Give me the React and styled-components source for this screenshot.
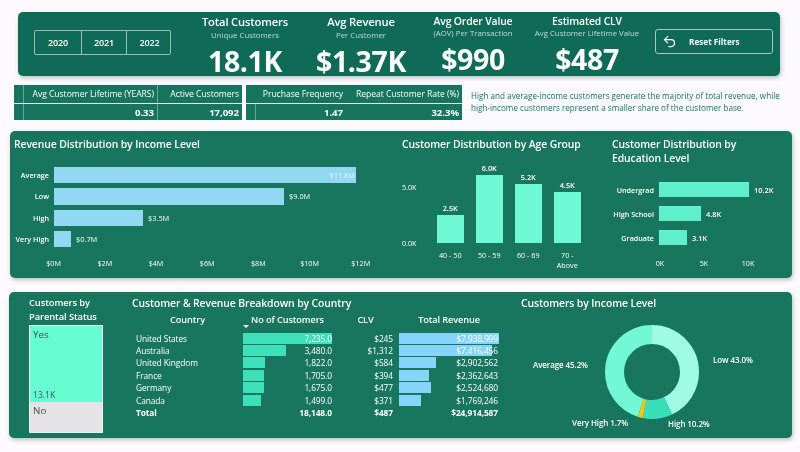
import React from 'react';
import styled, {createGlobalStyle} from 'styled-components';
import {Undo2} from 'lucide-react';

const GlobalStyle = createGlobalStyle`
    html, body {
        margin: 0;
        padding: 0;
        background: #fcfafc;
    }
    * {
        box-sizing: border-box;
    }
`;

const Page = styled.div`
    width: 800px;
    height: 452px;
    overflow: hidden;
    padding-top: 12px;
    font-family: "Open Sans", "Noto Sans", sans-serif;
    color: #fff;
    filter: blur(0.3px);
`;

const Banner = styled.header`
    width: 762px;
    height: 64px;
    margin-left: 18px;
    padding-left: 16px;
    display: grid;
    grid-template-columns: 137px 148px 84px 140px 88px 142px;
    background: #0f6b57;
    border-radius: 5px;
    box-shadow: 1px 2px 4px rgba(60, 90, 85, 0.35);
`;

const Slicer = styled.div`
    width: 137px;
    height: 25px;
    margin-top: 18px;
    display: grid;
    grid-template-columns: 46px 45px 46px;
    border: 1px solid #9dbdb4;
    border-radius: 2px;
`;

const SlicerItem = styled.div`
    display: flex;
    align-items: center;
    justify-content: center;
    font-size: 9px;
    letter-spacing: -0.1px;
    font-weight: 600;
    border-left: ${({$first}) => ($first ? 'none' : '1px solid #9dbdb4')};
`;

const Kpi = styled.div`
    display: flex;
    flex-direction: column;
    align-items: center;
    white-space: nowrap;
    padding-top: ${({$raised}) => ($raised ? '2px' : '3px')};
`;

const KpiTitle = styled.div`
    font-size: ${({$small}) => ($small ? '10.4px' : '11.2px')};
    line-height: 14px;
    font-weight: 600;
    letter-spacing: -0.15px;
`;

const KpiSub = styled.div`
    font-size: 7.8px;
    line-height: 11px;
    color: #c5dad4;
    margin-top: ${({$small}) => ($small ? '0' : '1px')};
`;

const KpiValue = styled.div`
    font-size: 28.5px;
    line-height: 34px;
    font-weight: 700;
    letter-spacing: -0.4px;
    margin-top: ${({$small}) => ($small ? '3px' : '3px')};
`;

const ResetButton = styled.div`
    width: 118px;
    height: 25px;
    margin: 17px 0 0 24px;
    padding-left: 6px;
    display: flex;
    align-items: center;
    border: 1px solid #a9c8bf;
    border-radius: 3px;
    font-size: 8.2px;
    font-weight: 700;
    gap: 12px;
`;

const InfoRow = styled.section`
    height: 35px;
    margin: 9px 0 0 14px;
    display: flex;
`;

const MiniTable = styled.div`
    width: ${({$width}) => $width}px;
    margin-right: ${({$gap}) => $gap}px;
    display: grid;
    grid-template-columns: ${({$cols}) => $cols};
    grid-template-rows: 18px 16px;
    row-gap: 1px;
    background: #dcebe6;
`;

const MiniHead = styled.div`
    background: #17755f;
    font-size: 8.6px;
    letter-spacing: -0.05px;
    display: flex;
    align-items: center;
    justify-content: flex-end;
    padding-right: 3px;
    white-space: nowrap;
    border-left: 1px solid ${({$line}) => ($line ? 'rgba(255, 255, 255, 0.35)' : 'transparent')};
`;

const MiniValue = styled(MiniHead)`
    font-size: 9.6px;
    font-weight: 700;
`;

const Insight = styled.p`
    width: 316px;
    margin: 5px 0 0;
    color: #1b7564;
    font-size: 8.14px;
    line-height: 11.5px;
`;

const Panel = styled.section`
    margin: ${({$top}) => $top}px 0 0 ${({$left}) => $left}px;
    width: ${({$left}) => 792 - $left}px;
    height: ${({$height}) => $height}px;
    display: grid;
    grid-template-columns: ${({$cols}) => $cols};
    background: #18765f;
    border-radius: 5px;
    box-shadow: 1px 2px 4px rgba(60, 90, 85, 0.35);
`;

const Section = styled.div`
    padding: ${({$pad}) => $pad || '6px 0 0 4px'};
    min-width: 0;
`;

const Title = styled.h3`
    margin: 0;
    font-size: ${({$small}) => ($small ? '9.4px' : '10.4px')};
    line-height: 14px;
    font-weight: 600;
    letter-spacing: -0.1px;
`;

const BarGrid = styled.div`
    display: grid;
    grid-template-columns: ${({$label}) => $label}px 1fr;
    column-gap: 5px;
    row-gap: ${({$gap}) => $gap}px;
    margin-top: ${({$top}) => $top}px;
`;

const BarLabel = styled.div`
    font-size: 7.2px;
    font-weight: 600;
    white-space: nowrap;
    display: flex;
    align-items: center;
    justify-content: flex-end;
`;

const BarTrack = styled.div`
    display: flex;
    align-items: center;
    gap: 5px;
    font-size: 7.4px;
    font-weight: ${({$bold}) => ($bold ? 600 : 500)};
    height: ${({$height}) => $height}px;
`;

const Bar = styled.div`
    height: 100%;
    background: ${({$color}) => $color};
    display: flex;
    align-items: center;
    justify-content: flex-end;
    padding-right: 1px;
    color: #e3f6fb;
`;

const Ticks = styled.div`
    display: flex;
    margin: ${({$margin}) => $margin};
`;

const Tick = styled.div`
    width: ${({$width}) => $width}px;
    text-align: center;
    font-size: 7.2px;
    font-weight: 500;
    line-height: 10px;
`;

const AgeBody = styled.div`
    display: flex;
    height: 115px;
    margin-top: 2px;
`;

const YAxis = styled.div`
    width: 35px;
    height: 95px;
    padding-top: 29px;
    display: flex;
    flex-direction: column;
    justify-content: space-between;
    font-size: 7.2px;
    font-weight: 500;
    line-height: 10px;
`;

const Columns = styled.div`
    display: flex;
    flex-direction: column;
`;

const ColumnPlot = styled.div`
    height: 90px;
    flex: none;
    display: flex;
    align-items: flex-end;
    gap: 12.5px;
`;

const ColumnItem = styled.div`
    width: 26.5px;
    display: flex;
    flex-direction: column;
    align-items: center;
    font-size: 7.4px;
    font-weight: 600;
    line-height: 13px;
`;

const ColumnBar = styled.div`
    width: 100%;
    background: #6ef8d4;
`;

const ColumnLabels = styled.div`
    display: flex;
    gap: 12.5px;
    margin-top: 7px;
`;

const ColumnLabel = styled.div`
    width: 26.5px;
    text-align: center;
    font-size: 7.2px;
    font-weight: 500;
    line-height: 10px;
    white-space: nowrap;
`;

const TreeMap = styled.div`
    width: 74px;
    height: 108px;
    margin-top: 1px;
    display: flex;
    flex-direction: column;
    border: 1px solid #f0f5f4;
    color: #40524c;
`;

const TreeCell = styled.div`
    height: ${({$height}) => $height}px;
    flex: none;
    padding: 3px 3px 1px;
    background: ${({$color}) => $color};
    display: flex;
    flex-direction: column;
    justify-content: space-between;
    font-size: 8.6px;
    line-height: 12px;
`;

const TreeName = styled.span`
    font-size: 9.8px;
`;

const Table = styled.div`
    width: 368px;
    display: grid;
    grid-template-columns: 111px 89px 61px 6px 100px;
    grid-template-rows: 22px;
    grid-auto-rows: 12.4px;
    font-size: 8.4px;
    letter-spacing: -0.1px;
`;

const HeadCell = styled.div`
    grid-column: ${({$col}) => $col};
    height: 18px;
    font-size: 9.2px;
    font-weight: 600;
    display: flex;
    align-items: center;
    justify-content: center;
    position: relative;
    padding-left: ${({$shift}) => $shift || 0}px;
`;

const SortArrow = styled.span`
    position: absolute;
    left: 0;
    top: 15px;
    width: 0;
    height: 0;
    border-left: 3px solid transparent;
    border-right: 3px solid transparent;
    border-top: 3px solid #fff;
`;

const NameCell = styled.div`
    padding-left: 4px;
    display: flex;
    align-items: center;
    font-weight: ${({$bold}) => ($bold ? 700 : 400)};
`;

const ValueCell = styled.div`
    position: relative;
    display: flex;
    align-items: center;
    justify-content: flex-end;
    padding-right: ${({$pad}) => $pad || 0}px;
    grid-column: ${({$col}) => $col || 'auto'};
    font-weight: ${({$bold}) => ($bold ? 700 : 400)};
`;

const DataBar = styled.div`
    position: absolute;
    left: 0;
    top: 0.7px;
    height: 11px;
    background: ${({$color}) => $color};
`;

const CellText = styled.span`
    position: relative;
`;

const DonutCanvas = styled.div`
    position: relative;
    height: 126px;
    padding: 15px 0 0 84px;
`;

const DonutSvg = styled.svg`
    display: block;
`;

const DonutLabel = styled.span`
    position: absolute;
    left: ${({$x}) => $x}px;
    top: ${({$y}) => $y}px;
    font-size: 8px;
    letter-spacing: -0.1px;
    line-height: 10px;
    font-weight: 600;
    white-space: nowrap;
`;

const revenue = [
    {label: 'Average', value: '$11.8M', width: 302, inside: true},
    {label: 'Low', value: '$9.0M', width: 230},
    {label: 'High', value: '$3.5M', width: 89},
    {label: 'Very High', value: '$0.7M', width: 17},
];

const ageGroups = [
    {label: '40 - 50', value: '2.5K', height: 28},
    {label: '50 - 59', value: '6.0K', height: 68},
    {label: '60 - 69', value: '5.2K', height: 59},
    {label: '70 -', sub: 'Above', value: '4.5K', height: 51},
];

const education = [
    {label: 'Undergrad', value: '10.2K', width: 90},
    {label: 'High School', value: '4.8K', width: 42},
    {label: 'Graduate', value: '3.1K', width: 28},
];

const countries = [
    ['United States', '7,235.0', 7235, '$245', '$7,938,999', 7938999],
    ['Australia', '3,480.0', 3480, '$1,312', '$7,416,456', 7416456],
    ['United Kingdom', '1,822.0', 1822, '$584', '$2,902,562', 2902562],
    ['France', '1,705.0', 1705, '$394', '$2,362,643', 2362643],
    ['Germany', '1,675.0', 1675, '$477', '$2,524,680', 2524680],
    ['Canada', '1,499.0', 1499, '$371', '$1,769,246', 1769246],
];

const income = [
    {share: 43.0, color: '#a0fbe5'},
    {share: 10.2, color: '#38dfb8'},
    {share: 1.7, color: '#f2c80f'},
    {share: 45.1, color: '#72f8d5'},
];

const Donut = () => {
    let offset = 0;
    return (
        <DonutSvg width="94" height="94" viewBox="0 0 94 94">
            <g transform="rotate(-90 47 47)">
                {income.map((slice) => {
                    const circle = (
                        <circle
                            key={slice.color}
                            cx="47"
                            cy="47"
                            r="37.5"
                            fill="none"
                            stroke={slice.color}
                            strokeWidth="19"
                            pathLength="100"
                            strokeDasharray={`${slice.share} ${100 - slice.share}`}
                            strokeDashoffset={-offset}
                        />
                    );
                    offset += slice.share;
                    return circle;
                })}
            </g>
        </DonutSvg>
    );
};

const App = () => {
    return (
        <Page>
            <GlobalStyle />
            <Banner>
                <Slicer>
                    <SlicerItem $first>2020</SlicerItem>
                    <SlicerItem>2021</SlicerItem>
                    <SlicerItem>2022</SlicerItem>
                </Slicer>
                <Kpi>
                    <KpiTitle>Total Customers</KpiTitle>
                    <KpiSub>Unique Customers</KpiSub>
                    <KpiValue>18.1K</KpiValue>
                </Kpi>
                <Kpi>
                    <KpiTitle>Avg Revenue</KpiTitle>
                    <KpiSub>Per Customer</KpiSub>
                    <KpiValue>$1.37K</KpiValue>
                </Kpi>
                <Kpi $raised>
                    <KpiTitle $small>Avg Order Value</KpiTitle>
                    <KpiSub $small>(AOV) Per Transaction</KpiSub>
                    <KpiValue $small>$990</KpiValue>
                </Kpi>
                <Kpi $raised>
                    <KpiTitle $small>Estimated CLV</KpiTitle>
                    <KpiSub $small>Avg Customer Lifetime Value</KpiSub>
                    <KpiValue $small>$487</KpiValue>
                </Kpi>
                <ResetButton>
                    <Undo2 size={15} strokeWidth={2} />
                    <span>Reset Filters</span>
                </ResetButton>
            </Banner>

            <InfoRow>
                <MiniTable $width={228} $gap={4} $cols="9px 134px 85px">
                    <MiniHead />
                    <MiniHead $line>Avg Customer Lifetime (YEARS)</MiniHead>
                    <MiniHead $line>Active Customers</MiniHead>
                    <MiniValue />
                    <MiniValue $line>0.33</MiniValue>
                    <MiniValue $line>17,092</MiniValue>
                </MiniTable>
                <MiniTable $width={216} $gap={9} $cols="9px 91px 116px">
                    <MiniHead />
                    <MiniHead>Pruchase Frequency</MiniHead>
                    <MiniHead>Repeat Customer Rate (%)</MiniHead>
                    <MiniValue />
                    <MiniValue $line>1.47</MiniValue>
                    <MiniValue>32.3%</MiniValue>
                </MiniTable>
                <Insight>
                    High and average-income customers generate the majority of total revenue, while
                    high-income customers represent a smaller share of the customer base.
                </Insight>
            </InfoRow>

            <Panel $top={11} $left={10} $height={147} $cols="392px 210px 180px">
                <Section>
                    <Title>Revenue Distribution by Income Level</Title>
                    <BarGrid $label={35} $gap={5} $top={16}>
                        {revenue.map((row) => (
                            <React.Fragment key={row.label}>
                                <BarLabel>{row.label}</BarLabel>
                                <BarTrack $height={16.3}>
                                    <Bar $color="#93d8f3" style={{width: row.width}}>
                                        {row.inside && row.value}
                                    </Bar>
                                    {!row.inside && row.value}
                                </BarTrack>
                            </React.Fragment>
                        ))}
                    </BarGrid>
                    <Ticks $margin="11px 0 0 14px">
                        {['$0M', '$2M', '$4M', '$6M', '$8M', '$10M', '$12M'].map((tick) => (
                            <Tick key={tick} $width={51.2}>{tick}</Tick>
                        ))}
                    </Ticks>
                </Section>
                <Section $pad="6px 0 0 0">
                    <Title>Customer Distribution by Age Group</Title>
                    <AgeBody>
                        <YAxis>
                            <span>5.0K</span>
                            <span>0.0K</span>
                        </YAxis>
                        <Columns>
                            <ColumnPlot>
                                {ageGroups.map((col) => (
                                    <ColumnItem key={col.label}>
                                        {col.value}
                                        <ColumnBar style={{height: col.height}} />
                                    </ColumnItem>
                                ))}
                            </ColumnPlot>
                            <ColumnLabels>
                                {ageGroups.map((col) => (
                                    <ColumnLabel key={col.label}>
                                        {col.label}
                                        {col.sub && <br />}
                                        {col.sub}
                                    </ColumnLabel>
                                ))}
                            </ColumnLabels>
                        </Columns>
                    </AgeBody>
                </Section>
                <Section $pad="6px 0 0 0">
                    <Title>Customer Distribution by<br />Education Level</Title>
                    <BarGrid $label={42} $gap={9} $top={17}>
                        {education.map((row) => (
                            <React.Fragment key={row.label}>
                                <BarLabel>{row.label}</BarLabel>
                                <BarTrack $height={15} $bold>
                                    <Bar $color="#60efcd" style={{width: row.width}} />
                                    {row.value}
                                </BarTrack>
                            </React.Fragment>
                        ))}
                    </BarGrid>
                    <Ticks $margin="13px 0 0 26px">
                        {['0K', '5K', '10K'].map((tick) => (
                            <Tick key={tick} $width={44}>{tick}</Tick>
                        ))}
                    </Ticks>
                </Section>
            </Panel>

            <Panel $top={14} $left={9} $height={146} $cols="123px 389px 271px">
                <Section $pad="4px 0 0 20px">
                    <Title $small>Customers by<br />Parental Status</Title>
                    <TreeMap>
                        <TreeCell $height={76} $color="#66fdd3">
                            <TreeName>Yes</TreeName>
                            <span>13.1K</span>
                        </TreeCell>
                        <TreeCell $height={30} $color="#e6e3e8">
                            <TreeName>No</TreeName>
                        </TreeCell>
                    </TreeMap>
                </Section>
                <Section $pad="4px 0 0 0">
                    <Title>Customer &amp; Revenue Breakdown by Country</Title>
                    <Table>
                        <HeadCell $col="1">Country</HeadCell>
                        <HeadCell $col="2">No of Customers<SortArrow /></HeadCell>
                        <HeadCell $col="3" $shift={6}>CLV</HeadCell>
                        <HeadCell $col="5">Total Revenue</HeadCell>
                        {countries.map((row) => (
                            <React.Fragment key={row[0]}>
                                <NameCell>{row[0]}</NameCell>
                                <ValueCell>
                                    <DataBar $color="#3de0b8" style={{width: `${(row[2] / 7235) * 89}px`}} />
                                    <CellText>{row[1]}</CellText>
                                </ValueCell>
                                <ValueCell>{row[3]}</ValueCell>
                                <ValueCell $col="5" $pad={1}>
                                    <DataBar $color="#85d4fb" style={{width: `${(row[5] / 7938999) * 100}px`}} />
                                    <CellText>{row[4]}</CellText>
                                </ValueCell>
                            </React.Fragment>
                        ))}
                        <NameCell $bold>Total</NameCell>
                        <ValueCell $bold>18,148.0</ValueCell>
                        <ValueCell $bold>$487</ValueCell>
                        <ValueCell $bold $col="5" $pad={1}>$24,914,587</ValueCell>
                    </Table>
                </Section>
                <Section $pad="4px 0 0 0">
                    <Title>Customers by Income Level</Title>
                    <DonutCanvas>
                        <Donut />
                        <DonutLabel $x={192} $y={45}>Low 43.0%</DonutLabel>
                        <DonutLabel $x={147} $y={109}>High 10.2%</DonutLabel>
                        <DonutLabel $x={51} $y={108}>Very High 1.7%</DonutLabel>
                        <DonutLabel $x={12} $y={50}>Average 45.2%</DonutLabel>
                    </DonutCanvas>
                </Section>
            </Panel>
        </Page>
    );
};

export default App;
